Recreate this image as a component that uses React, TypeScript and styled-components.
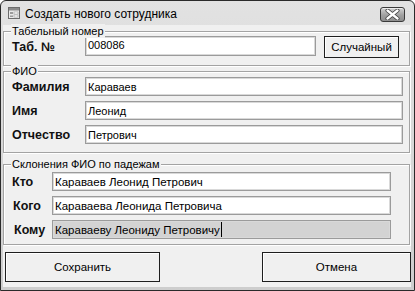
import styled, { createGlobalStyle } from "styled-components";

const GlobalStyle = createGlobalStyle`
  html, body {
    margin: 0;
    padding: 0;
    background: #ffffff;
  }
  * {
    box-sizing: border-box;
  }
`;

const Window = styled.div`
  width: 415px;
  height: 291px;
  display: flex;
  flex-direction: column;
  border: 1px solid #2a2a2a;
  border-radius: 6px 6px 0 0;
  background: linear-gradient(to bottom, #e2e2e2, #cdcdcd);
  overflow: hidden;
`;

const TitleBar = styled.div`
  height: 24px;
  display: flex;
  align-items: center;
  padding: 0 9px 0 7px;
  gap: 5px;
  font-family: "Liberation Sans", Arial, sans-serif;
  font-size: 12px;
  color: #000;
`;

const Title = styled.span`
  flex: 1;
  padding-top: 1px;
`;

const CloseButton = styled.div`
  width: 25px;
  height: 15px;
  margin-top: 3px;
  border: 1px solid #3a3a3a;
  border-radius: 3px;
  background: linear-gradient(to bottom, #d2d2d2, #a0a0a0 55%, #8e8e8e);
  box-shadow: inset 0 1px 0 rgba(255, 255, 255, 0.6);
  display: flex;
  align-items: center;
  justify-content: center;
`;

const Client = styled.div`
  flex: 1;
  margin: 0 3px 3px 2px;
  background: #f0f0f0;
  display: flex;
  flex-direction: column;
  padding-top: 6px;
  padding-bottom: 5px;
`;

const Group = styled.div<{ $gapTop: number; $pad: string }>`
  position: relative;
  margin-top: ${(p) => p.$gapTop}px;
  margin-right: 1px;
  padding: ${(p) => p.$pad};
  border: 1px solid #a3a3a3;
  box-shadow: inset 1px 1px 0 #ffffff, 1px 1px 0 #ffffff;
  display: flex;
  flex-direction: column;
  gap: 5px;
`;

const Caption = styled.span`
  position: absolute;
  top: -8px;
  left: 7px;
  padding: 0 1px;
  background: #f0f0f0;
  font-family: "Liberation Sans", Arial, sans-serif;
  font-size: 11px;
  line-height: 14px;
  color: #000;
`;

const Row = styled.div`
  display: flex;
  align-items: center;
  height: 19px;
`;

const Label = styled.span<{ $width: number; $indent?: number }>`
  width: ${(p) => p.$width}px;
  flex-shrink: 0;
  padding-left: ${(p) => p.$indent ?? 0}px;
  font-family: "Liberation Sans", Arial, sans-serif;
  font-weight: bold;
  font-size: 12.5px;
  color: #111;
`;

const TextBox = styled.div<{ $readOnly?: boolean; $big?: boolean; $height?: number }>`
  flex: 1;
  height: ${(p) => p.$height ?? 19}px;
  display: flex;
  align-items: center;
  padding-left: 2px;
  border: 1px solid #9b9b9b;
  box-shadow: inset 0 0 0 1px #d9d9d9;
  background: ${(p) => (p.$readOnly ? "#d3d3d3" : "#ffffff")};
  font-family: "Liberation Sans", Arial, sans-serif;
  font-size: ${(p) => (p.$big ? 11.5 : 11)}px;
  color: #000;
  white-space: nowrap;
`;

const Caret = styled.span`
  width: 1px;
  height: 15px;
  margin-left: 1px;
  background: #000;
`;

const PlainButton = styled.div<{ $width: number; $height: number }>`
  width: ${(p) => p.$width}px;
  height: ${(p) => p.$height}px;
  flex-shrink: 0;
  display: flex;
  align-items: center;
  justify-content: center;
  border: 1px solid #1e1e1e;
  background: #f0f0f0;
  box-shadow: inset 1px 1px 0 #ffffff;
  font-family: "Liberation Sans", Arial, sans-serif;
  font-size: 11.5px;
  color: #000;
`;

const RandomRow = styled.div`
  display: flex;
  align-items: flex-start;
  height: 22px;
`;

const Footer = styled.div`
  margin-top: 7px;
  padding-left: 2px;
  display: flex;
  justify-content: space-between;
`;

const FormIcon = () => (
  <svg width="12" height="12" viewBox="0 0 12 12">
    <rect x="0.5" y="0.5" width="11" height="11" fill="#e9e9e9" stroke="#6b6b6b" />
    <rect x="1" y="1" width="10" height="2.5" fill="#8a8a8a" />
    <rect x="2" y="5" width="3" height="2" fill="#9a9a9a" />
    <rect x="6" y="5" width="4" height="2" fill="#ffffff" stroke="#8c8c8c" strokeWidth="0.5" />
    <rect x="2" y="8.5" width="3" height="1.5" fill="#9a9a9a" />
    <rect x="6" y="8" width="4" height="2" fill="#ffffff" stroke="#8c8c8c" strokeWidth="0.5" />
  </svg>
);

const CloseGlyph = () => (
  <svg width="15" height="11" viewBox="0 0 15 11">
    <path d="M2.5 1.5 L12.5 9.5 M12.5 1.5 L2.5 9.5" stroke="#3c3c3c" strokeWidth="4" strokeLinecap="round" />
    <path d="M2.5 1.5 L12.5 9.5 M12.5 1.5 L2.5 9.5" stroke="#ffffff" strokeWidth="2.4" strokeLinecap="round" />
  </svg>
);

const fio = [
  { label: "Фамилия", value: "Караваев" },
  { label: "Имя", value: "Леонид" },
  { label: "Отчество", value: "Петрович" },
];

const cases = [
  { label: "Кто", value: "Караваев Леонид Петрович", indent: 0 },
  { label: "Кого", value: "Караваева Леонида Петровича", indent: 1 },
  { label: "Кому", value: "Караваеву Леониду Петровичу", indent: 2, readOnly: true },
];

const App = () => {
  return (
    <>
      <GlobalStyle />
      <Window>
        <TitleBar>
          <FormIcon />
          <Title>Создать нового сотрудника</Title>
          <CloseButton>
            <CloseGlyph />
          </CloseButton>
        </TitleBar>
        <Client>
          <Group $gapTop={0} $pad="4px 12px 7px 8px">
            <Caption>Табельный номер</Caption>
            <RandomRow>
              <Label $width={73} style={{ marginTop: 4 }}>Таб. №</Label>
              <TextBox $height={20} style={{ flex: "none", width: 231, alignItems: "flex-start", paddingTop: 2 }}>
                008086
              </TextBox>
              <PlainButton $width={75} $height={22} style={{ marginLeft: 8 }}>
                Случайный
              </PlainButton>
            </RandomRow>
          </Group>
          <Group $gapTop={5} $pad="5px 6px 8px 8px">
            <Caption>ФИО</Caption>
            {fio.map((f) => (
              <Row key={f.label}>
                <Label $width={73}>{f.label}</Label>
                <TextBox>{f.value}</TextBox>
              </Row>
            ))}
          </Group>
          <Group $gapTop={11} $pad="7px 18px 5px 8px">
            <Caption>Склонения ФИО по падежам</Caption>
            {cases.map((c) => (
              <Row key={c.label}>
                <Label $width={40} $indent={c.indent}>{c.label}</Label>
                <TextBox $big $readOnly={c.readOnly}>
                  {c.value}
                  {c.readOnly && <Caret />}
                </TextBox>
              </Row>
            ))}
          </Group>
          <Footer>
            <PlainButton $width={155} $height={30}>Сохранить</PlainButton>
            <PlainButton $width={149} $height={30}>Отмена</PlainButton>
          </Footer>
        </Client>
      </Window>
    </>
  );
};

export default App;
